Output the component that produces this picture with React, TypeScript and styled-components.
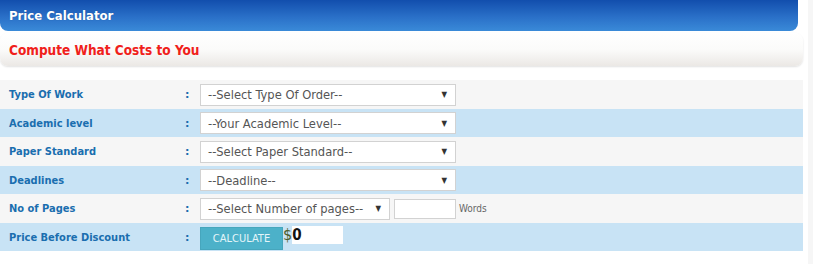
import React from 'react';
import styled, { createGlobalStyle } from 'styled-components';

const GlobalStyle = createGlobalStyle`
  html, body {
    margin: 0;
    padding: 0;
    background: #ffffff;
  }
  body {
    font-family: 'DejaVu Sans', Tahoma, sans-serif;
  }
`;

const Root = styled.div`
  width: 813px;
  height: 264px;
  box-sizing: border-box;
  border-right: 5px solid #f6f6f6;
`;

const Header = styled.div`
  display: flex;
  align-items: center;
  width: 798px;
  height: 31px;
  box-sizing: border-box;
  padding-left: 9px;
  border-radius: 0 0 8px 8px;
  background: linear-gradient(to bottom, #124ead 0%, #2a70c8 55%, #3a8ad8 100%);
  color: #ffffff;
  font-size: 13px;
  font-weight: bold;
  font-stretch: condensed;
  text-shadow: 0 0 1px rgba(0, 0, 0, 0.25);
`;

const SubHeader = styled.div`
  display: flex;
  align-items: center;
  width: 803px;
  height: 33px;
  margin-top: 2px;
  box-sizing: border-box;
  padding-left: 9px;
  border-radius: 8px;
  background: linear-gradient(to bottom, #ffffff 0%, #fbfbfa 50%, #ebe8e5 100%);
  box-shadow: 0 1px 2px rgba(0, 0, 0, 0.12);
  color: #f0201a;
  font-size: 13.5px;
  font-weight: bold;
  font-stretch: condensed;
`;

const Table = styled.div`
  width: 803px;
  margin-top: 14px;
`;

const Row = styled.div<{ $alt?: boolean; $h: number }>`
  display: flex;
  align-items: center;
  height: ${(p) => p.$h}px;
  background: ${(p) => (p.$alt ? '#c8e3f5' : '#f6f6f6')};
`;

const Label = styled.div`
  width: 185px;
  padding-left: 9px;
  box-sizing: border-box;
  color: #1a6eaf;
  font-size: 11px;
  font-weight: bold;
  font-stretch: condensed;
`;

const Colon = styled.div`
  width: 15px;
  color: #1a6eaf;
  font-size: 11px;
  font-weight: bold;
`;

const Select = styled.div<{ $w: number }>`
  display: flex;
  align-items: center;
  justify-content: space-between;
  width: ${(p) => p.$w}px;
  height: 22px;
  box-sizing: border-box;
  padding: 0 8px 0 7px;
  background: #ffffff;
  border: 1px solid #d2d2d2;
  color: #555555;
  font-size: 12.8px;
  font-stretch: condensed;
`;

const Arrow = styled.span`
  font-size: 8px;
  color: #333333;
`;

const WordsInput = styled.div`
  width: 62px;
  height: 20px;
  margin-left: 4px;
  box-sizing: border-box;
  background: #ffffff;
  border: 1px solid #d2d2d2;
`;

const WordsLabel = styled.span`
  margin-left: 3px;
  color: #666666;
  font-size: 10px;
  font-stretch: condensed;
`;

const CalcButton = styled.button`
  width: 83px;
  height: 23px;
  margin-top: 3px;
  border: 1px solid #46a6bd;
  background: #4cb1c9;
  color: #e4f5f9;
  font-family: inherit;
  font-size: 11px;
  font-stretch: condensed;
  padding: 0;
`;

const Price = styled.div`
  display: flex;
  align-items: center;
  align-self: flex-start;
  margin-top: 2px;
`;

const Dollar = styled.span`
  color: #4d5e2d;
  font-size: 16px;
  font-stretch: condensed;
`;

const Amount = styled.div`
  width: 51px;
  height: 18px;
  background: #ffffff;
  color: #111111;
  font-size: 15px;
  font-weight: bold;
  line-height: 18px;
  font-stretch: condensed;
`;

const fields = [
  { label: 'Type Of Work', value: '--Select Type Of Order--', h: 29 },
  { label: 'Academic level', value: '--Your Academic Level--', h: 28 },
  { label: 'Paper Standard', value: '--Select Paper Standard--', h: 29 },
  { label: 'Deadlines', value: '--Deadline--', h: 28 },
];

const App: React.FC = () => {
  return (
    <Root>
      <GlobalStyle />
      <Header>Price Calculator</Header>
      <SubHeader>Compute What Costs to You</SubHeader>
      <Table>
        {fields.map((f, i) => (
          <Row key={f.label} $alt={i % 2 === 1} $h={f.h}>
            <Label>{f.label}</Label>
            <Colon>:</Colon>
            <Select $w={256}>
              <span>{f.value}</span>
              <Arrow>▼</Arrow>
            </Select>
          </Row>
        ))}
        <Row $h={29}>
          <Label>No of Pages</Label>
          <Colon>:</Colon>
          <Select $w={190}>
            <span>--Select Number of pages--</span>
            <Arrow>▼</Arrow>
          </Select>
          <WordsInput />
          <WordsLabel>Words</WordsLabel>
        </Row>
        <Row $alt $h={28}>
          <Label>Price Before Discount</Label>
          <Colon>:</Colon>
          <CalcButton>CALCULATE</CalcButton>
          <Price>
            <Dollar>$</Dollar>
            <Amount>0</Amount>
          </Price>
        </Row>
      </Table>
    </Root>
  );
};

export default App;
